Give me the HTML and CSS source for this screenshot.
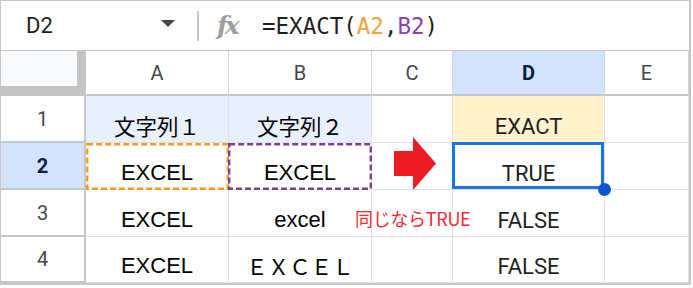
FILE: index.html
```html
<!DOCTYPE html>
<html lang="ja">
  <head>
    <meta charset="UTF-8" />
    <meta name="viewport" content="width=device-width, initial-scale=1.0" />
    <title>EXACT</title>
    <link rel="stylesheet" href="styles.css">
  </head>
  <body>
    <div class="frame">
      <div class="formula-bar">
        <div class="name-box">
          <span>D2</span>
          <span class="caret"></span>
        </div>
        <div class="divider"></div>
        <div class="fx">fx</div>
        <div class="formula">=EXACT(<span class="ref-a">A2</span>,<span class="ref-b">B2</span>)</div>
      </div>
      <div class="grid">
        <div class="corner"><div class="corner-bar"></div></div>
        <div class="col-head">A</div>
        <div class="col-head">B</div>
        <div class="col-head">C</div>
        <div class="col-head active">D</div>
        <div class="col-head">E</div>

        <div class="row-head">1</div>
        <div class="cell head-blue cjk">文字列１</div>
        <div class="cell head-blue cjk">文字列２</div>
        <div class="cell"></div>
        <div class="cell result head-yellow">EXACT</div>
        <div class="cell"></div>

        <div class="row-head active">2</div>
        <div class="cell marked"><svg class="dash" width="143" height="47"><rect x="1.2" y="1.2" width="140.6" height="44.6" stroke="#f89b1c" /></svg>EXCEL</div>
        <div class="cell marked"><svg class="dash dash-b" width="144" height="47"><rect x="1.2" y="1.2" width="141.6" height="44.6" stroke="#7b3f96" /></svg>EXCEL</div>
        <div class="cell"></div>
        <div class="cell result selected">TRUE<span class="sel-box"></span><span class="handle"></span></div>
        <div class="cell"></div>

        <div class="row-head">3</div>
        <div class="cell">EXCEL</div>
        <div class="cell">excel</div>
        <div class="cell"></div>
        <div class="cell result">FALSE</div>
        <div class="cell"></div>

        <div class="row-head">4</div>
        <div class="cell">EXCEL</div>
        <div class="cell cjk">ＥＸＣＥＬ</div>
        <div class="cell"></div>
        <div class="cell result">FALSE</div>
        <div class="cell"></div>
      </div>

      <svg class="arrow" width="44" height="54" viewBox="0 0 44 54">
        <polygon points="0,14 19,14 19,0 42,26.5 19,53 19,39 0,39" fill="#ed1c24" />
      </svg>
      <div class="note">同じならTRUE</div>
    </div>
  </body>
</html>
```

FILE: styles.css
```css
* {
  margin: 0;
  padding: 0;
  box-sizing: border-box;
}
body {
  background: #fff;
  font-family: Roboto, "Noto Sans CJK JP", sans-serif;
}
.frame {
  position: relative;
  width: 691px;
  border: 1px solid #c7c7c7;
  border-right-width: 2px;
  border-bottom-width: 2px;
}
.formula-bar {
  display: flex;
  align-items: center;
  height: 50px;
  border-bottom: 1px solid #c7c7c7;
}
.name-box {
  width: 186px;
  display: flex;
  align-items: center;
  justify-content: space-between;
  padding: 0 12px 0 25px;
  font-size: 22px;
  color: #1f1f1f;
}
.caret {
  width: 0;
  height: 0;
  border-left: 7px solid transparent;
  border-right: 7px solid transparent;
  border-top: 7px solid #444746;
  margin-bottom: 4px;
}
.divider {
  width: 2px;
  height: 30px;
  background: #c7c7c7;
  margin-left: 10px;
}
.fx {
  width: 22px;
  margin-left: 18px;
  font-family: "DejaVu Serif", serif;
  font-style: italic;
  font-weight: bold;
  font-size: 25px;
  letter-spacing: -3px;
  color: #9e9e9e;
}
.formula {
  margin-left: 23px;
  font-family: "DejaVu Sans Mono", monospace;
  font-size: 22.5px;
  color: #1f1f1f;
}
.ref-a {
  color: #f6a13a;
}
.ref-b {
  color: #8a45a8;
}
.grid {
  display: grid;
  grid-template-columns: 85px 143px 143px 81px 152px 84px;
  grid-template-rows: 45px 47px 47px 47px 46px;
}
.corner {
  background: #f8f9fa;
  border-right: 2px solid #c4c7c5;
  border-bottom: 2px solid #c4c7c5;
}
.corner-bar {
  height: 100%;
  border-right: 7px solid #c4c4c4;
  border-bottom: 8px solid #c4c4c4;
}
.col-head {
  display: flex;
  align-items: center;
  justify-content: center;
  font-size: 20px;
  color: #444746;
  border-right: 1px solid #d4d4d4;
  border-bottom: 2px solid #c4c7c5;
}
.row-head {
  display: flex;
  align-items: center;
  justify-content: center;
  font-size: 20px;
  color: #444746;
  border-right: 2px solid #c4c7c5;
  border-bottom: 2px solid #c4c7c5;
}
.col-head.active,
.row-head.active {
  background: #d3e3fd;
  color: #041e49;
  font-weight: bold;
}
.cell {
  position: relative;
  display: flex;
  align-items: flex-end;
  justify-content: center;
  padding-bottom: 3px;
  font-family: "Liberation Sans", "Noto Sans CJK JP", sans-serif;
  font-size: 22px;
  color: #000;
  border-right: 1px solid #e1e1e1;
  border-bottom: 1px solid #e1e1e1;
}
.cell.cjk {
  font-family: "Noto Sans CJK JP", sans-serif;
  font-size: 21.5px;
  line-height: 1.2;
}
.cell.result {
  font-family: Roboto, sans-serif;
  color: #1f1f1f;
}
.cell.marked {
  z-index: 1;
}
.cell.selected {
  z-index: 2;
}
.head-blue {
  background: #e8f0fe;
}
.head-yellow {
  background: #fff2cc;
}
.dash {
  position: absolute;
  top: 0;
  left: 0;
}
.dash-b {
  left: -1px;
}
.dash rect {
  fill: none;
  stroke-width: 2.4;
  stroke-dasharray: 6 3;
}
.sel-box {
  position: absolute;
  top: -1px;
  left: -1px;
  right: 0;
  bottom: 0;
  border: 3px solid #1a73e8;
}
.handle {
  position: absolute;
  left: 145px;
  top: 40px;
  width: 13px;
  height: 13px;
  border-radius: 50%;
  background: #0b57d0;
}
.arrow {
  position: absolute;
  left: 393px;
  top: 136px;
}
.note {
  position: absolute;
  left: 354px;
  top: 204px;
  font-family: "Noto Sans CJK JP", sans-serif;
  font-size: 18px;
  color: #ee2a35;
  letter-spacing: -0.3px;
}
```
